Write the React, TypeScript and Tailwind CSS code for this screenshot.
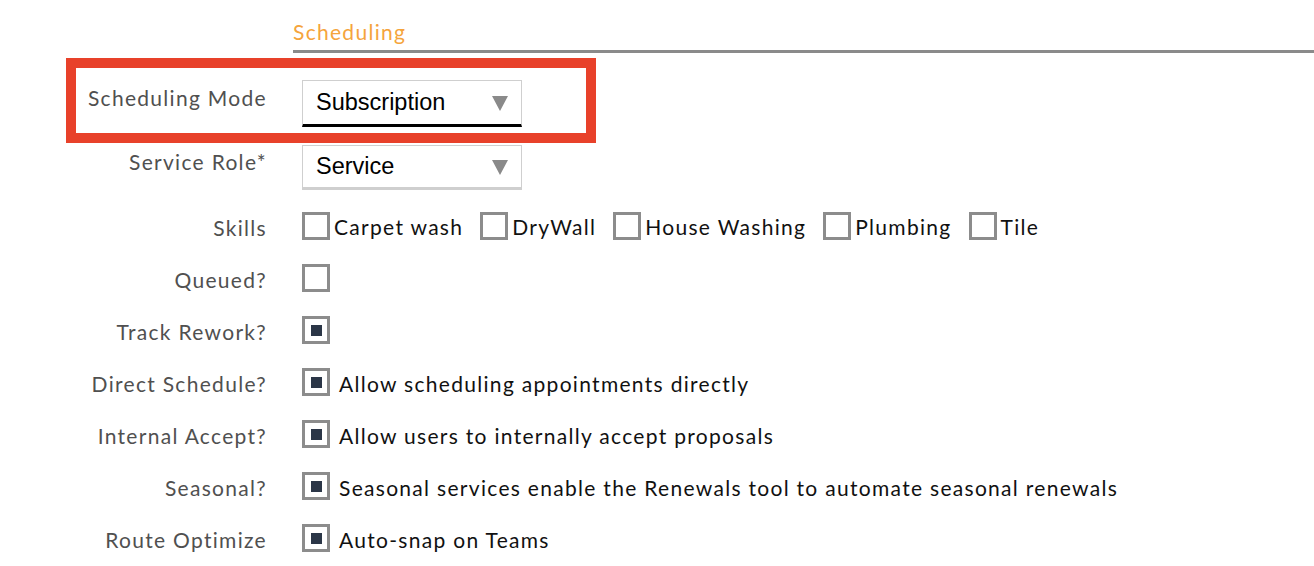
import React from "react";

const font = { fontFamily: "Lato, 'Open Sans', sans-serif" };

function Box({ checked = false }: { checked?: boolean }) {
  return (
    <span className="flex h-[28px] w-[28px] shrink-0 items-center justify-center border-[3px] border-[#8c8c8c] bg-white">
      {checked && <span className="h-[11px] w-[11px] bg-[#2b3647]" />}
    </span>
  );
}

function Select({ value, active = false }: { value: string; active?: boolean }) {
  return (
    <div
      className={`flex w-[220px] items-center justify-between border border-[#cfcfcf] bg-white pl-[13px] pr-[13px] ${
        active ? "h-[47px] border-b-[3px] border-b-black" : "h-[45px] border-b-[3px] border-b-[#cfcfcf]"
      }`}
    >
      <span className="font-['Liberation_Sans',Arial,sans-serif] text-[23.5px] leading-none text-black">{value}</span>
      <svg width="16" height="16" viewBox="0 0 16 16">
        <polygon points="0,1 16,1 8,16" fill="#8a8a8a" />
      </svg>
    </div>
  );
}

function Row({ label, children }: { label: string; children: React.ReactNode }) {
  return (
    <div className="flex h-[52px] items-center">
      <div className="w-[267px] pt-[3px] text-right text-[#505050]">{label}</div>
      <div className="ml-[35px] flex items-center">{children}</div>
    </div>
  );
}

const skills = ["Carpet wash", "DryWall", "House Washing", "Plumbing", "Tile"];

export default function App() {
  return (
    <div className="h-[566px] w-[1314px] overflow-hidden bg-white" style={font}>
      <div className="ml-[293px] h-[53px] border-b-[3px] border-[#8a8a8a] pt-[18px] text-[21px] leading-[28px] tracking-[1.3px] text-[#f5a43c]">
        Scheduling
      </div>

      <div className="relative mt-[27px] flex items-start">
        <span className="pointer-events-none absolute left-[66px] top-[-22px] h-[85px] w-[530px] border-[10px] border-[#e8412a]" />
        <div className="w-[267px] pt-[4px] text-right text-[21px] leading-[28px] tracking-[1.3px] text-[#505050]">
          Scheduling Mode
        </div>
        <div className="ml-[35px]">
          <Select value="Subscription" active />
        </div>
      </div>

      <div className="mt-[18px] flex items-start">
        <div className="w-[267px] pt-[3px] text-right text-[21px] leading-[28px] tracking-[1.3px] text-[#505050]">
          Service Role*
        </div>
        <div className="ml-[35px]">
          <Select value="Service" />
        </div>
      </div>

      <div className="mt-[10px] text-[21px] tracking-[1.3px]">
        <Row label="Skills">
          <div className="flex items-center gap-[17px]">
            {skills.map((s) => (
              <label key={s} className="flex items-center gap-[4px] text-[#111]">
                <Box />
                <span className="pt-[2px]">{s}</span>
              </label>
            ))}
          </div>
        </Row>
        <Row label="Queued?">
          <Box />
        </Row>
        <Row label="Track Rework?">
          <Box checked />
        </Row>
        <Row label="Direct Schedule?">
          <Box checked />
          <span className="ml-[9px] pt-[4px] text-[#111]">Allow scheduling appointments directly</span>
        </Row>
        <Row label="Internal Accept?">
          <Box checked />
          <span className="ml-[9px] pt-[4px] text-[#111]">Allow users to internally accept proposals</span>
        </Row>
        <Row label="Seasonal?">
          <Box checked />
          <span className="ml-[9px] pt-[4px] text-[#111]">
            Seasonal services enable the Renewals tool to automate seasonal renewals
          </span>
        </Row>
        <Row label="Route Optimize">
          <Box checked />
          <span className="ml-[9px] pt-[4px] text-[#111]">Auto-snap on Teams</span>
        </Row>
      </div>
    </div>
  );
}
